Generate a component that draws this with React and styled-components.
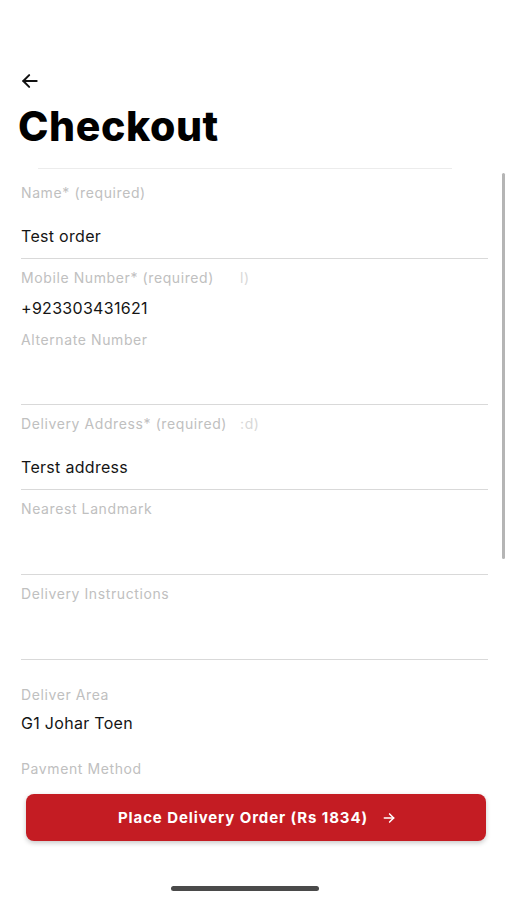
import styled, { createGlobalStyle } from 'styled-components'


const GlobalStyle = createGlobalStyle`
  body {
    margin: 0;
    padding: 0;
    background: #fff;
    font-family: Inter, "Noto Sans", sans-serif;
  }

  * {
    box-sizing: border-box;
  }
`

const Page = styled.div`
  width: 507px;
  height: 900px;
  display: flex;
  flex-direction: column;
  background: #fff;
  overflow: hidden;
`

const Header = styled.div`
  padding: 70px 18px 0;
`

const BackButton = styled.button`
  border: 0;
  background: none;
  padding: 0;
  margin-left: 2px;
  height: 22px;
  display: flex;
  align-items: center;
  color: #111;
  cursor: pointer;
`

const Title = styled.h1`
  margin: 8px 0 0;
  font-size: 41px;
  line-height: 52px;
  font-weight: 800;
  color: #000;
  letter-spacing: 0.6px;
`

const ScrollArea = styled.div`
  position: relative;
  height: 606px;
  margin-top: 16px;
  overflow: hidden;
`

const Divider = styled.div`
  height: 1px;
  margin: 0 55px 0 38px;
  background: #ececec;
`

const ScrollThumb = styled.div`
  position: absolute;
  right: 2px;
  top: 5px;
  width: 3px;
  height: 386px;
  border-radius: 2px;
  background: #b5b5b5;
`

const Form = styled.div`
  padding: 0 19px 0 21px;
`

const Field = styled.div`
  padding-top: ${p => p.top || 9}px;
  border-bottom: ${p => p.line ? '1px solid #d9d9d9' : '0'};
`

const Label = styled.div`
  height: 20px;
  line-height: 20px;
  font-size: 14px;
  letter-spacing: 0.6px;
  color: #c0c0c0;
  white-space: nowrap;
`

const Ghost = styled.span`
  margin-left: ${p => p.offset}px;
  color: #d8d8d8;
`

const InputArea = styled.div`
  height: ${p => p.h}px;
  display: flex;
  align-items: flex-end;
  padding-bottom: ${p => p.pb}px;
  font-size: 16px;
  line-height: 20px;
  letter-spacing: 0.3px;
  color: #151515;
`

const Footer = styled.div`
  padding: 20px 21px 0 26px;
  display: flex;
  flex-direction: column;
`

const OrderButton = styled.button`
  width: 460px;
  height: 47px;
  border: 0;
  border-radius: 8px;
  background: #c41c23;
  box-shadow: 0 2px 5px rgba(0, 0, 0, 0.22);
  color: #fff;
  font-family: Inter, "Noto Sans", sans-serif;
  font-size: 15px;
  font-weight: 700;
  letter-spacing: 0.9px;
  display: flex;
  align-items: center;
  justify-content: center;
  gap: 14px;
  padding-right: 4px;
  cursor: pointer;
`

const HomeBar = styled.div`
  width: 148px;
  height: 5px;
  margin: 45px 0 0 145px;
  border-radius: 3px;
  background: #4a4a4a;
`


const fields = [
  { label: 'Name* (required)', value: 'Test order', top: 14, h: 55, pb: 12, line: true },
  { label: 'Mobile Number* (required)', ghost: 'l)', offset: 26, value: '+923303431621', h: 33, pb: 3 },
  { label: 'Alternate Number', h: 54, pb: 12, line: true },
  { label: 'Delivery Address* (required)', ghost: ':d)', offset: 13, value: 'Terst address', h: 55, pb: 12, line: true },
  { label: 'Nearest Landmark', h: 55, pb: 12, line: true },
  { label: 'Delivery Instructions', h: 55, pb: 12, line: true },
  { label: 'Deliver Area', value: 'G1 Johar Toen', top: 25, h: 28, pb: 0 },
  { label: 'Payment Method', top: 26, h: 20, pb: 0 },
]


function App() {
  return (
    <>
      <GlobalStyle />
      <Page>
        <Header>
          <BackButton aria-label='back'>
            <svg width='20' height='20' viewBox='0 0 24 24' fill='none' stroke='currentColor' strokeWidth='2.4' strokeLinecap='round' strokeLinejoin='round'>
              <path d='M20 12H4' />
              <path d='M11 5l-7 7 7 7' />
            </svg>
          </BackButton>
          <Title>Checkout</Title>
        </Header>

        <ScrollArea>
          <Divider />
          <ScrollThumb />
          <Form>
            {
              fields.map((f, i) => (
                <Field key={i} top={f.top} line={f.line}>
                  <Label>
                    {f.label}
                    {f.ghost && <Ghost offset={f.offset}>{f.ghost}</Ghost>}
                  </Label>
                  <InputArea h={f.h} pb={f.pb}>{f.value}</InputArea>
                </Field>
              ))
            }
          </Form>
        </ScrollArea>

        <Footer>
          <OrderButton>
            Place Delivery Order (Rs 1834)
            <svg width='14' height='14' viewBox='0 0 24 24' fill='none' stroke='currentColor' strokeWidth='2.6' strokeLinecap='round' strokeLinejoin='round'>
              <path d='M4 12h16' />
              <path d='M13 5l7 7-7 7' />
            </svg>
          </OrderButton>
          <HomeBar />
        </Footer>
      </Page>
    </>
  )
}

export default App
